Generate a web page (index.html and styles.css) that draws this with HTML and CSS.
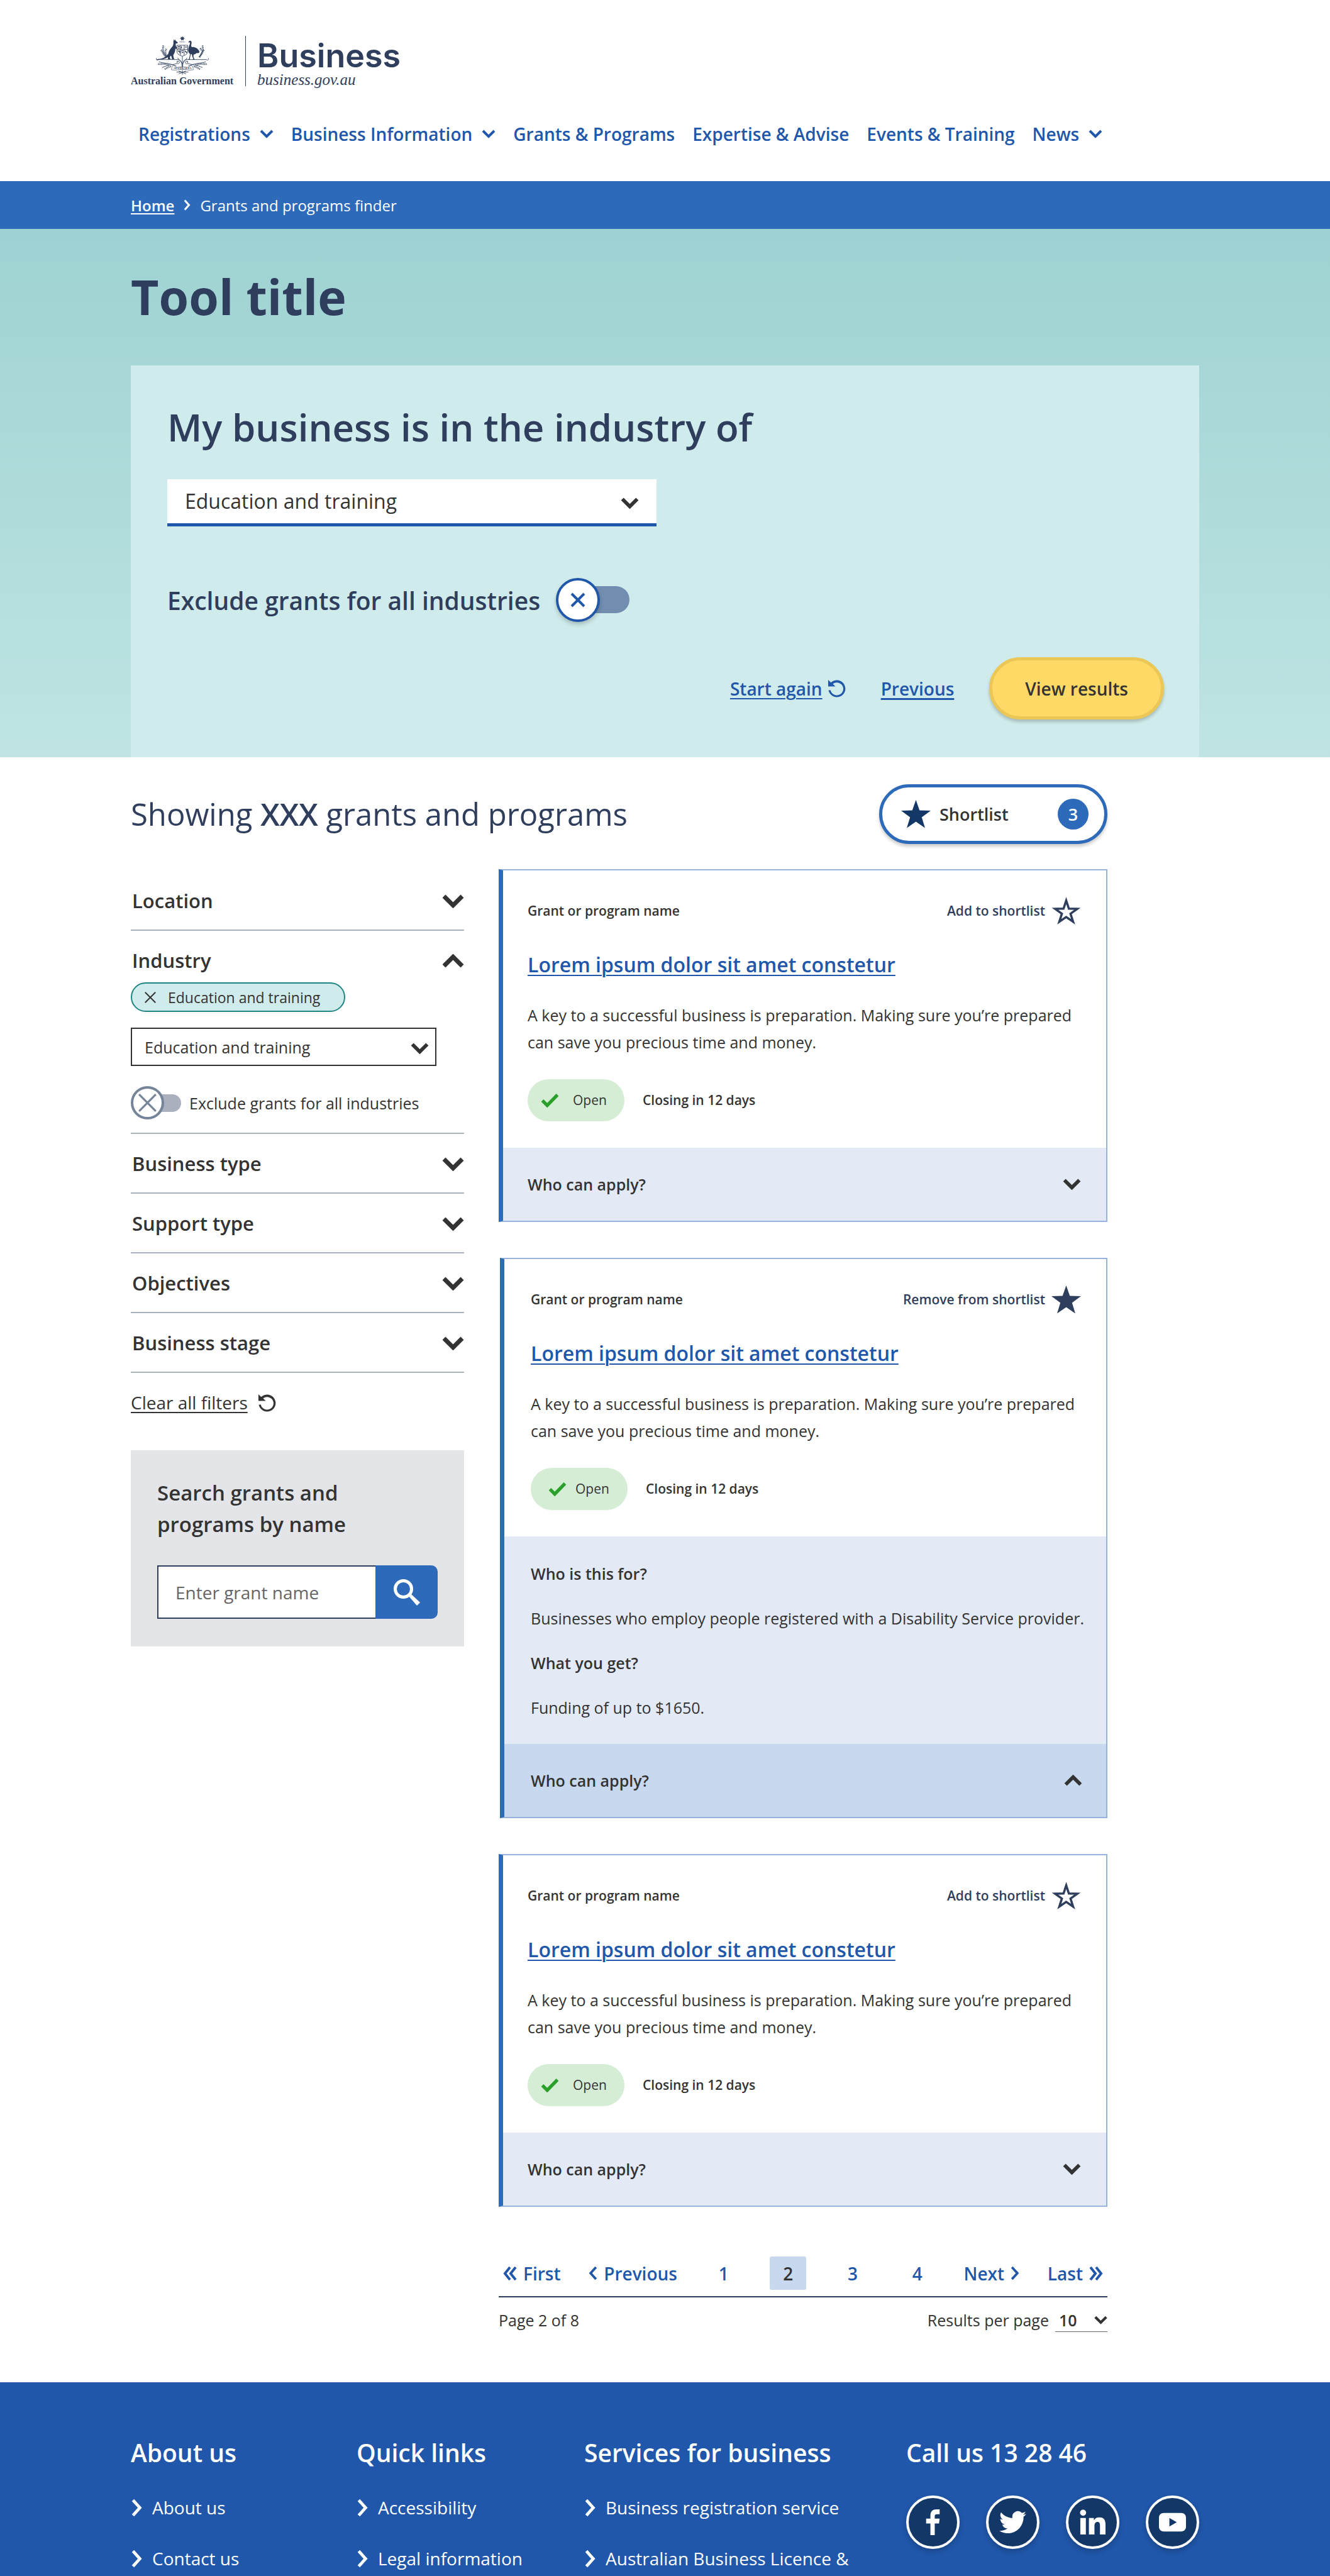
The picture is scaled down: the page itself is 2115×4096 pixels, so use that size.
FILE: index.html
```html
<!DOCTYPE html>
<html lang="en">
<head>
<meta charset="utf-8">
<meta name="viewport" content="width=device-width, initial-scale=1">
<title>Grants and programs finder | business.gov.au</title>
<link rel="stylesheet" href="styles.css">
</head>
<body>
<svg class="sprite" aria-hidden="true">
  <symbol id="chevron-down" viewBox="0 0 35 22"><path d="M3 3l14.500 14.500L32 3" fill="none" stroke="currentColor" stroke-width="7"/></symbol>
  <symbol id="chevron-up" viewBox="0 0 35 22"><path d="M3 19L17.500 4.500 32 19" fill="none" stroke="currentColor" stroke-width="7"/></symbol>
  <symbol id="chevron-round" viewBox="0 0 22 14"><path d="M2 2l9 9 9-9" fill="none" stroke="currentColor" stroke-width="4"/></symbol>
  <symbol id="angle-right" viewBox="0 0 14 24"><path d="M2 2l9 10-9 10" fill="none" stroke="currentColor" stroke-width="4"/></symbol>
  <symbol id="angle-left" viewBox="0 0 14 24"><path d="M12 2L3 12l9 10" fill="none" stroke="currentColor" stroke-width="4"/></symbol>
  <symbol id="double-right" viewBox="0 0 22 22"><path d="M2 1l8 10-8 10M11 1l8 10-8 10" fill="none" stroke="currentColor" stroke-width="4"/></symbol>
  <symbol id="double-left" viewBox="0 0 22 22"><path d="M20 1l-8 10 8 10M11 1L3 11l8 10" fill="none" stroke="currentColor" stroke-width="4"/></symbol>
  <symbol id="cross" viewBox="0 0 24 24"><path d="M2 2l20 20M22 2L2 22" fill="none" stroke="currentColor" stroke-width="4"/></symbol>
  <symbol id="cross-thin" viewBox="0 0 24 24"><path d="M1 1l22 22M23 1L1 23" fill="none" stroke="currentColor" stroke-width="2.600"/></symbol>
  <symbol id="reset" viewBox="0 0 30 30"><path d="M1 1v11h12l-4.300-4.300A10.500 10.500 0 1 1 5 18H1.500A14 14 0 1 0 5.500 5.500z" fill="currentColor"/></symbol>
  <symbol id="star" viewBox="0 0 48 46"><path d="M24 0l5.900 16.900L48 17.400 33.500 28.200 38.800 45.600 24 35.300 9.200 45.600 14.500 28.200 0 17.400l18.100-.5z" fill="currentColor"/></symbol>
  <symbol id="star-outline" viewBox="0 0 48 46"><path d="M24 6l4.300 13.200 13.700.3-11 8 4.200 13L24 32.800l-11.200 7.700 4.200-13-11-8 13.700-.3z" fill="none" stroke="currentColor" stroke-width="3.600"/></symbol>
  <symbol id="tick" viewBox="0 0 30 24"><path d="M2.500 12.500l8 8L27.500 3" fill="none" stroke="currentColor" stroke-width="5.500"/></symbol>
  <symbol id="search" viewBox="0 0 42 42"><circle cx="15.500" cy="15.500" r="13" fill="none" stroke="currentColor" stroke-width="5"/><path d="M24 27l3.500-3.500L42 37l-5 5z" fill="currentColor"/></symbol>
</svg>

<header class="header">
  <div class="container">
    <a class="brand" href="#">
      <span class="brand-gov">
        <svg class="crest" viewBox="0 0 288 210" role="img" aria-label="Commonwealth coat of arms">
          <g fill="currentColor">
            <path d="M144 0l3 7 7-3-3 7 6 4-7 2 1 7-7-4-7 4 1-7-7-2 6-4-3-7 7 3z"/>
            <path d="M98 17l4 7 4-6 2 8 11 8-2 6-9 1c-2 9 2 17 6 23l-2 6-6-2c0 17-6 27-12 36l4 18 4 5H84l4-5-6-16c-6 6-8 12-4 16l4 5H66c-2-9-2-22 2-35 4-16 14-26 22-36 4-6 6-14 5-20-1-6 2-12 3-19z"/>
            <path d="M70 108C60 122 40 127 6 130l-2-4c26-1 48-8 62-30z"/>
            <path d="M177 36c1-12 13-14 17-4 2 12-6 20 2 28 16-2 32 6 40 22 4 12-6 12-14 10-6 6-10 8-16 8l-2 12 6 14 6 3h-20l8-4-6-13-2-12-6-2-6 28 6 3h-16l6-4 6-27c-10-8-12-22-8-36 2-10 8-18 8-26-2-4-6-2-9 0z"/>
          </g>
          <g fill="none" stroke="currentColor" stroke-width="3">
            <path d="M129 32h30" stroke-dasharray="6 3"/>
            <path d="M115 50h58v36c0 12-14 18-29 24-15-6-29-12-29-24zM134 50v54M154 50v54M115 72h58"/>
            <path d="M120 58h10M139 56v10M158 60h12M121 66h8M120 82h10v12M138 80h12M140 90h10M159 80l10 12" stroke-width="5"/>
            <path d="M2 120c-4 10 4 14 12 8h110c14 2 18 18 18 38M286 120c4 10-4 14-12 8H164c-14 2-18 18-18 38M144 110v60"/>
            <path d="M118 118c8 16 20 20 26 34 6-14 18-18 26-34M112 140c14-10 20 4 12 10s-14-6-4-10M176 140c-14-10-20 4-12 10s14-6 4-10"/>
            <path d="M16 140c24 10 52 4 96 24M272 140c-24 10-52 4-96 24M34 172c30-16 60-16 80-22M254 172c-30-16-60-16-80-22"/>
            <path d="M88 164c18-8 22 8 20 8 24-6 48-6 72 0-2 0 2-16 20-8l4 20c-12 0-18 4-24 2-24-6-48-6-72 0-6 2-12-2-24-2z" stroke-width="2"/>
            <path d="M124 190l40 16M164 190l-40 16M144 186v24M112 196h26M150 196h26"/>
          </g>
          <g fill="none" stroke="currentColor" stroke-width="9" stroke-dasharray="4 4">
            <path d="M40 52c-6 26 4 44 22 64M28 76c8 8 14 26 24 36M56 70c-6 14-4 24 0 34"/>
            <path d="M254 52c6 26-4 44-18 64M262 76c-8 8-14 26-24 36M242 66c4 6 4 10 2 14"/>
            <path d="M12 152c16 4 34-6 58 6M276 152c-16 4-34-6-58 6M48 180c14-6 20-14 34-14M240 180c-14-6-20-14-34-14"/>
          </g>
          <text x="144" y="182" class="crest-scroll">AUSTRALIA</text>
        </svg>
        <span class="brand-gov-name">Australian Government</span>
      </span>
      <span class="brand-site">
        <span class="brand-name">Business</span>
        <span class="brand-domain">business.gov.au</span>
      </span>
    </a>
    <nav class="nav" aria-label="Main">
      <a href="#">Registrations <svg class="icon-nav"><use href="#chevron-round"/></svg></a>
      <a href="#">Business Information <svg class="icon-nav"><use href="#chevron-round"/></svg></a>
      <a href="#">Grants &amp; Programs</a>
      <a href="#">Expertise &amp; Advise</a>
      <a href="#">Events &amp; Training</a>
      <a href="#">News <svg class="icon-nav"><use href="#chevron-round"/></svg></a>
    </nav>
  </div>
</header>

<nav class="breadcrumb" aria-label="Breadcrumb">
  <div class="container breadcrumb-list">
    <a href="#">Home</a>
    <svg class="icon-crumb"><use href="#angle-right"/></svg>
    <span>Grants and programs finder</span>
  </div>
</nav>

<section class="hero">
  <div class="container">
    <h1 class="hero-title">Tool title</h1>
    <form class="panel">
      <label class="panel-title" for="industry">My business is in the industry of</label>
      <div class="select select-large">
        <select id="industry"><option>Education and training</option></select>
        <svg class="select-icon"><use href="#chevron-down"/></svg>
      </div>
      <div class="panel-toggle">
        <label for="exclude">Exclude grants for all industries</label>
        <span class="toggle toggle-large">
          <input type="checkbox" id="exclude">
          <span class="toggle-knob"><svg><use href="#cross"/></svg></span>
        </span>
      </div>
      <div class="panel-actions">
        <a class="reset-link" href="#"><span>Start again</span> <svg class="icon-reset"><use href="#reset"/></svg></a>
        <a href="#">Previous</a>
        <button class="button-primary" type="button">View results</button>
      </div>
    </form>
  </div>
</section>

<main class="container">
  <div class="results">
    <div class="results-head">
      <h2 class="results-title">Showing <b>XXX</b> grants and programs</h2>
      <button class="button-shortlist" type="button">
        <svg class="icon-star"><use href="#star"/></svg>
        <span>Shortlist</span>
        <span class="badge">3</span>
      </button>
    </div>

    <aside class="filters">
      <div class="filter"><button class="filter-title" type="button">Location <svg class="icon-filter"><use href="#chevron-down"/></svg></button></div>
      <div class="filter filter-open">
        <button class="filter-title" type="button">Industry <svg class="icon-filter"><use href="#chevron-up"/></svg></button>
        <button class="chip" type="button"><svg class="icon-chip"><use href="#cross-thin"/></svg>Education and training</button>
        <div class="select select-small">
          <select aria-label="Industry"><option>Education and training</option></select>
          <svg class="select-icon"><use href="#chevron-down"/></svg>
        </div>
        <div class="filter-toggle">
          <span class="toggle toggle-small">
            <input type="checkbox" id="exclude-filter">
            <span class="toggle-knob"><svg><use href="#cross-thin"/></svg></span>
          </span>
          <label for="exclude-filter">Exclude grants for all industries</label>
        </div>
      </div>
      <div class="filter"><button class="filter-title" type="button">Business type <svg class="icon-filter"><use href="#chevron-down"/></svg></button></div>
      <div class="filter"><button class="filter-title" type="button">Support type <svg class="icon-filter"><use href="#chevron-down"/></svg></button></div>
      <div class="filter"><button class="filter-title" type="button">Objectives <svg class="icon-filter"><use href="#chevron-down"/></svg></button></div>
      <div class="filter"><button class="filter-title" type="button">Business stage <svg class="icon-filter"><use href="#chevron-down"/></svg></button></div>
      <a class="clear-link" href="#"><span>Clear all filters</span> <svg class="icon-reset"><use href="#reset"/></svg></a>
      <form class="search">
        <label for="grant-name">Search grants and programs by name</label>
        <div class="search-row">
          <input type="text" id="grant-name" placeholder="Enter grant name">
          <button type="button" aria-label="Search"><svg><use href="#search"/></svg></button>
        </div>
      </form>
    </aside>

    <div class="cards">
      <article class="card">
        <div class="card-body">
          <div class="card-head">
            <span>Grant or program name</span>
            <button class="card-save" type="button">Add to shortlist <svg class="icon-star"><use href="#star-outline"/></svg></button>
          </div>
          <h3><a href="#">Lorem ipsum dolor sit amet constetur</a></h3>
          <p>A key to a successful business is preparation. Making sure you’re prepared can save you precious time and money.</p>
          <div class="card-status"><span class="pill"><svg class="icon-tick"><use href="#tick"/></svg>Open</span><b>Closing in 12 days</b></div>
        </div>
        <button class="card-toggle" type="button">Who can apply? <svg class="icon-card"><use href="#chevron-down"/></svg></button>
      </article>

      <article class="card card-open">
        <div class="card-body">
          <div class="card-head">
            <span>Grant or program name</span>
            <button class="card-save" type="button">Remove from shortlist <svg class="icon-star"><use href="#star"/></svg></button>
          </div>
          <h3><a href="#">Lorem ipsum dolor sit amet constetur</a></h3>
          <p>A key to a successful business is preparation. Making sure you’re prepared can save you precious time and money.</p>
          <div class="card-status"><span class="pill"><svg class="icon-tick"><use href="#tick"/></svg>Open</span><b>Closing in 12 days</b></div>
        </div>
        <dl class="card-details">
          <dt>Who is this for?</dt>
          <dd>Businesses who employ people registered with a Disability Service provider.</dd>
          <dt>What you get?</dt>
          <dd>Funding of up to $1650.</dd>
        </dl>
        <button class="card-toggle" type="button">Who can apply? <svg class="icon-card"><use href="#chevron-up"/></svg></button>
      </article>

      <article class="card">
        <div class="card-body">
          <div class="card-head">
            <span>Grant or program name</span>
            <button class="card-save" type="button">Add to shortlist <svg class="icon-star"><use href="#star-outline"/></svg></button>
          </div>
          <h3><a href="#">Lorem ipsum dolor sit amet constetur</a></h3>
          <p>A key to a successful business is preparation. Making sure you’re prepared can save you precious time and money.</p>
          <div class="card-status"><span class="pill"><svg class="icon-tick"><use href="#tick"/></svg>Open</span><b>Closing in 12 days</b></div>
        </div>
        <button class="card-toggle" type="button">Who can apply? <svg class="icon-card"><use href="#chevron-down"/></svg></button>
      </article>

      <div class="paging">
        <nav class="pages" aria-label="Pages">
          <a href="#"><svg class="icon-double"><use href="#double-left"/></svg>First</a>
          <a href="#"><svg class="icon-angle"><use href="#angle-left"/></svg>Previous</a>
          <a class="page" href="#">1</a>
          <a class="page page-current" href="#" aria-current="page">2</a>
          <a class="page" href="#">3</a>
          <a class="page" href="#">4</a>
          <a href="#">Next<svg class="icon-angle"><use href="#angle-right"/></svg></a>
          <a href="#">Last<svg class="icon-double"><use href="#double-right"/></svg></a>
        </nav>
        <div class="paging-info">
          <span>Page 2 of 8</span>
          <span class="per-page">
            <label for="per-page">Results per page</label>
            <span class="select select-inline">
              <select id="per-page"><option>10</option></select>
              <svg class="select-icon"><use href="#chevron-down"/></svg>
            </span>
          </span>
        </div>
      </div>
    </div>
  </div>
</main>

<footer class="footer">
  <div class="container footer-grid">
    <section>
      <h2>About us</h2>
      <ul>
        <li><a href="#"><svg class="icon-link"><use href="#angle-right"/></svg>About us</a></li>
        <li><a href="#"><svg class="icon-link"><use href="#angle-right"/></svg>Contact us</a></li>
      </ul>
    </section>
    <section>
      <h2>Quick links</h2>
      <ul>
        <li><a href="#"><svg class="icon-link"><use href="#angle-right"/></svg>Accessibility</a></li>
        <li><a href="#"><svg class="icon-link"><use href="#angle-right"/></svg>Legal information</a></li>
      </ul>
    </section>
    <section>
      <h2>Services for business</h2>
      <ul>
        <li><a href="#"><svg class="icon-link"><use href="#angle-right"/></svg>Business registration service</a></li>
        <li><a href="#"><svg class="icon-link"><use href="#angle-right"/></svg>Australian Business Licence &amp;</a></li>
      </ul>
    </section>
    <section>
      <h2>Call us 13 28 46</h2>
      <div class="social">
        <a href="#" aria-label="Facebook"><svg viewBox="0 0 44 44"><path d="M18 43V24h-7v-8h7v-5C18 4 22 1 28 1h5v8h-4c-3 0-4 1-4 3v4h8l-1 8h-7v19z" fill="currentColor"/></svg></a>
        <a href="#" aria-label="Twitter"><svg viewBox="0 0 24 24"><path d="M23.950 4.570a10 10 0 0 1-2.820.770 4.960 4.960 0 0 0 2.160-2.720c-.95.550-2 .950-3.130 1.180a4.920 4.920 0 0 0-8.380 4.480C7.690 8.090 4.070 6.130 1.640 3.160a4.920 4.920 0 0 0 1.520 6.570 4.900 4.900 0 0 1-2.230-.610v.060a4.920 4.920 0 0 0 3.950 4.830 5 5 0 0 1-2.210.080 4.940 4.940 0 0 0 4.600 3.420A9.870 9.870 0 0 1 0 19.540a14 14 0 0 0 7.550 2.210c9.050 0 14-7.500 14-13.980 0-.210 0-.420-.020-.630a9.940 9.940 0 0 0 2.460-2.550z" fill="currentColor"/></svg></a>
        <a href="#" aria-label="LinkedIn"><svg viewBox="0 0 44 44"><path d="M2 15h9v27H2zM6.500 1.500a5 5 0 1 1 0 10 5 5 0 0 1 0-10zM16 15h8v4c1.500-3 4.500-5 9-5 8 0 10 5 10 12v16h-9V28c0-4-.5-6.500-4-6.500s-5 2.500-5 6.500v14h-9z" fill="currentColor"/></svg></a>
        <a href="#" aria-label="YouTube"><svg viewBox="0 0 44 44"><path d="M8 7h28c5 0 8 3 8 8v14c0 5-3 8-8 8H8c-5 0-8-3-8-8V15c0-5 3-8 8-8zm9 8v14l12-7z" fill="currentColor" fill-rule="evenodd"/></svg></a>
      </div>
    </section>
  </div>
</footer>
</body>
</html>
```
FILE: styles.css
```css
:root {
  --ink: #333;
  --navy: #2f3e5c;
  --blue: #2057aa;
  --blue-mid: #2d6aba;
  --blue-pale: #e3eaf6;
  --blue-soft: #c8d8ee;
  --aqua: #d0ebeb;
}

* { box-sizing: border-box; }

body {
  margin: 0;
  display: flex;
  flex-direction: column;
  min-height: 100vh;
  background: #fff;
  color: var(--ink);
  font-family: "Open Sans", "Noto Sans", sans-serif;
  font-size: 25px;
  line-height: 34px;
}

h1, h2, h3, p, ul, dl, dd { margin: 0; padding: 0; }
button, input, select { font: inherit; color: inherit; margin: 0; }
button { background: none; border: 0; padding: 0; cursor: pointer; }
svg { display: block; flex: none; }
.sprite { position: absolute; width: 0; height: 0; }

.container { width: 100%; max-width: 1699px; margin: 0 auto; }

/* Header */
.header { padding: 57px 0 56px; }
.brand { display: inline-flex; color: var(--navy); text-decoration: none; }
.brand-gov { display: flex; flex-direction: column; align-items: center; padding-right: 19px; border-right: 1px solid var(--navy); height: 80px; }
.crest { width: 84px; height: 62px; }
.crest-scroll { font: bold 17px "Liberation Serif", serif; text-anchor: middle; fill: currentColor; }
.brand-gov-name { font: bold 16px/19px "Liberation Serif", serif; white-space: nowrap; }
.brand-site { display: flex; flex-direction: column; padding: 8px 0 0 18px; }
.brand-name { font: 600 52px/48px Inter, sans-serif; }
.brand-domain { font: italic 25px/28px "Liberation Serif", serif; }

.nav { display: flex; gap: 28px; margin-top: 53px; padding-left: 12px; }
.nav a { display: flex; align-items: center; gap: 15px; color: var(--blue); font-size: 28px; font-weight: 600; line-height: 38px; text-decoration: none; white-space: nowrap; }
.icon-nav { width: 22px; height: 14px; }

/* Breadcrumb */
.breadcrumb { background: var(--blue-mid); color: #fff; font-size: 24px; line-height: 33px; }
.breadcrumb-list { display: flex; align-items: center; gap: 15px; height: 76px; }
.breadcrumb a { color: inherit; font-weight: 600; text-underline-offset: 3px; }
.icon-crumb { width: 11px; height: 18px; }

/* Industry question */
.hero { background: linear-gradient(#9ed2d2, #bfe4e3); padding-top: 56px; }
.hero-title { color: var(--navy); font-size: 77px; line-height: 104px; font-weight: 700; }
.panel { margin-top: 57px; padding: 57px 56px 60px 58px; background: var(--aqua); color: var(--navy); }
.panel-title { display: block; font-size: 60px; line-height: 82px; font-weight: 600; margin-bottom: 42px; }
.panel-toggle { display: flex; align-items: center; gap: 25px; margin-top: 82px; font-size: 39px; line-height: 53px; font-weight: 600; }
.panel-actions { display: flex; align-items: center; justify-content: flex-end; gap: 56px; margin-top: 56px; font-size: 28px; line-height: 38px; font-weight: 600; }
.panel-actions a { color: var(--blue); text-decoration-thickness: 3px; text-underline-offset: 4px; }
.reset-link, .clear-link { display: flex; align-items: center; gap: 8px; text-decoration: none; }
.reset-link span, .clear-link span { text-decoration: underline; text-decoration-thickness: 2px; text-underline-offset: 4px; }
.icon-reset { width: 29px; height: 29px; }

.button-primary { height: 99px; padding: 0 52px; border: 5px solid #ebc856; border-radius: 50px; background: #ffd966; color: var(--ink); box-shadow: 0 4px 5px rgba(0, 0, 0, .2); }

/* Drop-downs */
.select { position: relative; display: block; }
.select select { width: 100%; appearance: none; border-radius: 0; background: transparent; }
.select-icon { position: absolute; top: 50%; transform: translateY(-50%); pointer-events: none; }
.select-large { width: 778px; max-width: 100%; color: var(--ink); }
.select-large select { height: 75px; padding: 0 28px; border: 0; border-bottom: 5px solid var(--blue); background: #fff; font-size: 32px; line-height: 50px; }
.select-large .select-icon { right: 28px; width: 29px; height: 18px; }
.select-small { width: 486px; max-width: 100%; margin-top: 25px; }
.select-small select { height: 61px; padding: 0 20px; border: 2px solid var(--ink); line-height: 40px; }
.select-small .select-icon { right: 12px; width: 29px; height: 18px; margin-top: 2px; }
.select-inline { width: 83px; }
.select-inline select { height: 38px; padding: 0 6px; border: 0; border-bottom: 1px solid #666; font-weight: 600; }
.select-inline .select-icon { right: 0; width: 21px; height: 14px; }

/* Switches */
.toggle { position: relative; display: block; }
.toggle input { display: block; appearance: none; margin: 0 0 0 auto; width: 80%; border-radius: 30px; }
.toggle-knob { position: absolute; left: 0; top: 0; display: grid; place-items: center; border-radius: 50%; background: #fff; pointer-events: none; }
.toggle-large { width: 117px; padding: 13px 0 14px; }
.toggle-large input { height: 43px; background: #718db0; }
.toggle-large .toggle-knob { width: 70px; height: 70px; border: 4px solid var(--blue); color: var(--blue); box-shadow: 0 4px 6px rgba(0, 0, 0, .2); }
.toggle-large svg { width: 24px; height: 24px; }
.toggle-small { width: 80px; padding: 13px 0 12px; }
.toggle-small input { height: 28px; background: #aab0be; }
.toggle-small .toggle-knob { width: 53px; height: 53px; border: 4px solid #76849a; color: #76849a; }
.toggle-small svg { width: 29px; height: 29px; }

/* Results */
.results { display: grid; grid-template-columns: minmax(0, 530fr) minmax(0, 968fr); column-gap: 55px; max-width: 1553px; padding: 43px 0 80px; }
.results-head { grid-column: 1 / -1; display: flex; align-items: center; justify-content: space-between; margin-bottom: 40px; }
.results-title { color: var(--navy); font-size: 49px; line-height: 67px; font-weight: 400; }
.results-title b { font-weight: 600; }
.button-shortlist { display: flex; align-items: center; width: 363px; height: 95px; padding: 0 25px 0 30px; border: 5px solid var(--blue-mid); border-radius: 48px; background: #fff; font-size: 27px; font-weight: 600; box-shadow: 0 4px 5px rgba(0, 0, 0, .2); }
.icon-star { width: 47px; height: 45px; }
.button-shortlist .icon-star { color: #133867; margin-right: 14px; }
.badge { display: grid; place-items: center; width: 49px; height: 49px; margin-left: auto; border-radius: 50%; background: var(--blue-mid); color: #fff; }

.filters { padding-top: 3px; }
.filter { border-bottom: 2px solid #aab1bf; }
.filter-title { display: flex; align-items: center; justify-content: space-between; width: 100%; padding: 27px 0 25px 2px; font-size: 31px; line-height: 41px; font-weight: 600; text-align: left; }
.filter-open { padding-bottom: 21px; }
.filter-open .filter-title { padding-bottom: 14px; }
.icon-filter { width: 35px; height: 22px; }
.chip { display: flex; align-items: center; gap: 19px; height: 47px; padding: 0 38px 0 20px; border: 2px solid #1f8582; border-radius: 24px; background: var(--aqua); font-size: 23px; }
.icon-chip { width: 18px; height: 18px; }
.filter-toggle { display: flex; align-items: center; gap: 13px; margin-top: 32px; }
.clear-link { display: inline-flex; gap: 16px; margin-top: 28px; color: var(--ink); font-size: 28px; line-height: 38px; }

.search { margin-top: 57px; padding: 43px 42px 44px; background: #e4e5e9; }
.search label { display: block; max-width: 340px; font-size: 33px; line-height: 50px; font-weight: 600; }
.search-row { display: flex; margin-top: 40px; }
.search-row input { flex: 1; min-width: 0; height: 85px; padding: 0 27px; border: 2px solid var(--navy); border-right: 0; border-radius: 0; background: #fff; font-size: 28px; }
.search-row input::placeholder { color: #666; opacity: 1; }
.search-row button { display: grid; place-items: center; width: 99px; border-radius: 0 10px 10px 0; background: var(--blue-mid); color: #fff; }
.search-row svg { width: 42px; height: 42px; }

/* Grant cards */
.card { border: 2px solid #96b3dc; border-left: 7px solid var(--blue-mid); margin-bottom: 57px; line-height: 33px; }
.card-body { padding: 42px 40px 42px 39px; }
.card-head { display: flex; align-items: center; justify-content: space-between; font-size: 21px; line-height: 29px; font-weight: 600; }
.card-save { display: flex; align-items: center; gap: 10px; color: var(--navy); }
.card h3 { margin-top: 41px; font-size: 32px; line-height: 44px; font-weight: 600; }
.card h3 a { color: var(--blue); text-decoration-thickness: 2px; text-underline-offset: 4px; }
.card p { margin-top: 37px; line-height: 43px; }
.card-status { display: flex; align-items: center; gap: 29px; margin-top: 37px; font-size: 21px; line-height: 29px; }
.card-status b { font-weight: 600; }
.pill { display: flex; align-items: center; gap: 22px; width: 154px; height: 67px; padding-left: 21px; border-radius: 34px; background: #d5edd5; }
.icon-tick { width: 29px; height: 23px; color: #2aa02a; }
.card-toggle { display: flex; align-items: center; justify-content: space-between; width: 100%; height: 116px; padding: 0 40px 0 39px; background: var(--blue-pale); font-weight: 600; }
.icon-card { width: 29px; height: 18px; }
.card-open { margin-left: 2px; }
.card-open .card-body { padding-left: 42px; }
.card-open .pill { gap: 14px; padding-left: 28px; }
.card-open .card-toggle { padding: 0 38px 0 42px; background: var(--blue-soft); }
.card-details { padding: 43px 30px 41px 42px; background: var(--blue-pale); }
.card-details dt { font-weight: 600; }
.card-details dd { margin-top: 38px; }
.card-details dd + dt { margin-top: 38px; }

/* Pagination */
.paging { margin-top: 79px; }
.pages { display: flex; align-items: center; justify-content: space-between; padding: 0 7px 10px; border-bottom: 2px solid var(--navy); font-size: 28px; font-weight: 600; }
.pages a { display: flex; align-items: center; gap: 10px; color: var(--blue); text-decoration: none; }
.pages .page { justify-content: center; width: 58px; height: 53px; border-radius: 3px; }
.pages .page-current { background: var(--blue-soft); color: var(--ink); }
.icon-double { width: 22px; height: 22px; }
.icon-angle { width: 14px; height: 23px; }
.paging-info { display: flex; align-items: center; justify-content: space-between; margin-top: 17px; }
.per-page { display: flex; align-items: center; gap: 10px; }

/* Footer */
.footer { flex: 1; background: var(--blue); color: #fff; padding: 86px 0 8px; }
.footer-grid { display: grid; grid-template-columns: minmax(0, 359fr) minmax(0, 362fr) minmax(0, 512fr) minmax(0, 466fr); }
.footer h2 { font-size: 39px; line-height: 52px; font-weight: 600; margin-bottom: 42px; }
.footer ul { display: grid; gap: 43px; list-style: none; font-size: 28px; line-height: 38px; }
.footer ul a { display: flex; align-items: center; gap: 15px; color: inherit; text-decoration: none; white-space: nowrap; }
.icon-link { width: 19px; height: 29px; }
.social { display: flex; justify-content: space-between; }
.social a { display: grid; place-items: center; width: 85px; height: 85px; border: 4px solid #fff; border-radius: 50%; background: #133867; color: #fff; box-shadow: 0 4px 8px rgba(0, 0, 0, .2); }
.social svg { width: 43px; height: 43px; }
```
